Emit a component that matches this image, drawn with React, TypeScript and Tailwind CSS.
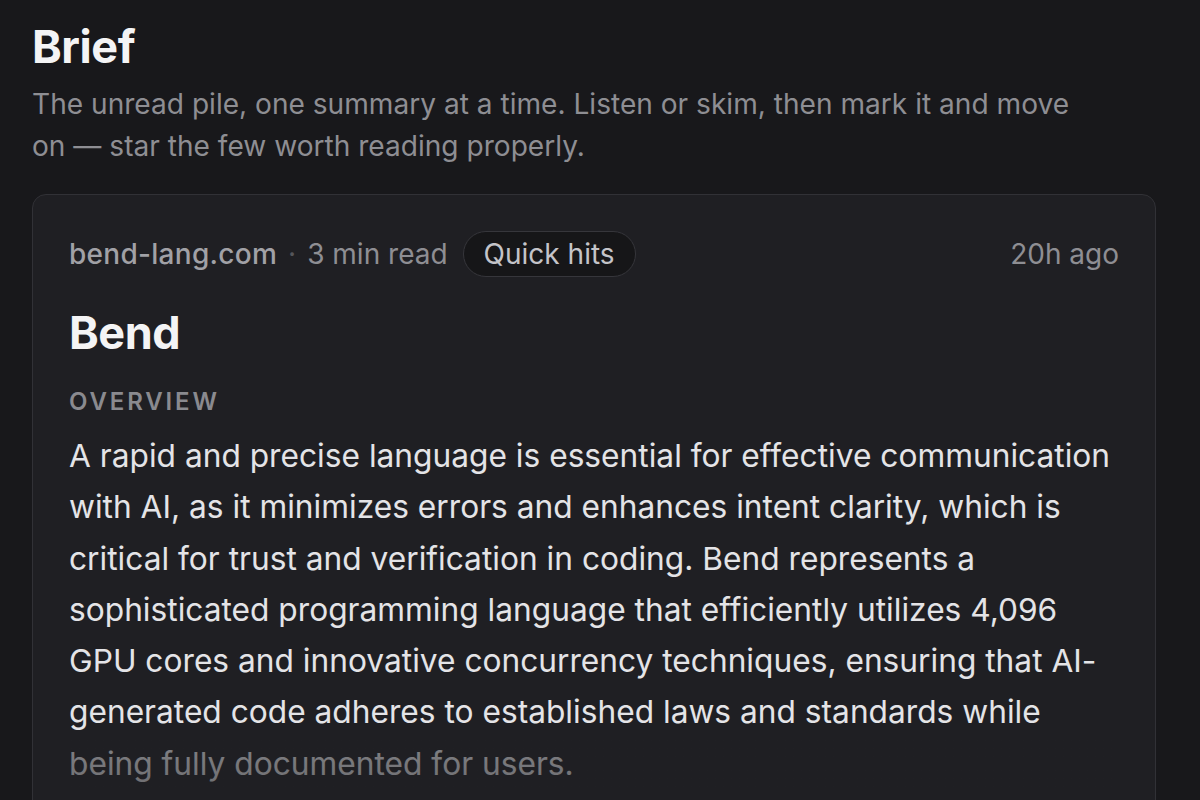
import React from "react";

const body =
  "A rapid and precise language is essential for effective communication with AI, as it minimizes errors and enhances intent clarity, which is critical for trust and verification in coding. Bend represents a sophisticated programming language that efficiently utilizes 4,096 GPU cores and innovative concurrency techniques, ensuring that AI-generated code adheres to established laws and standards while being fully documented for users.";

const App = () => {
  return (
    <div
      className="min-h-screen bg-[#18181b] text-white pl-8 pr-[44px] pt-[17px]"
      style={{ fontFamily: "Inter, 'Noto Sans', sans-serif" }}
    >
      <h1 className="text-[45px] leading-[60px] font-bold tracking-[-0.01em] text-[#f4f4f5]">
        Brief
      </h1>
      <p className="mt-[6px] text-[28.1px] leading-[42px] text-[#8e8e93] max-w-[1050px]">
        The unread pile, one summary at a time. Listen or skim, then mark it and move on — star the few worth reading properly.
      </p>

      {/* Card */}
      <div className="mt-[27px] rounded-[14px] border border-[#313136] bg-[#1f1f23] pl-[36px] pr-[36px] pt-[36px] pb-10 overflow-hidden">
        <div className="flex items-center justify-between">
          <div className="flex items-center text-[28px]">
            <span className="font-medium text-[#a1a1a6] tracking-[0.01em]">bend-lang.com</span>
            <span className="mx-[11px] text-[#55555a]">·</span>
            <span className="text-[#8e8e93]">3 min read</span>
            <span className="ml-[15px] rounded-full border border-[#36363b] bg-[#161618] px-[20px] h-[46px] flex items-center text-[#c4c4c9]">
              Quick hits
            </span>
          </div>
          <span className="text-[28px] text-[#8e8e93]">20h ago</span>
        </div>

        <h2 className="mt-[28px] text-[45px] leading-[56px] font-bold tracking-[-0.01em] text-[#f4f4f5]">
          Bend
        </h2>

        <div className="mt-[25px] text-[24px] leading-[32px] font-semibold tracking-[0.12em] text-[#8a8a8f]">
          OVERVIEW
        </div>

        <div className="relative mt-[12px]">
          <p className="text-[31.7px] leading-[51.3px] text-[#e4e4e7]">{body}</p>
          <div className="absolute left-0 right-0 bottom-0 h-[50px] bg-gradient-to-b from-[#1f1f23]/50 to-[#1f1f23]/60 pointer-events-none" />
        </div>
      </div>
    </div>
  );
};

export default App;
